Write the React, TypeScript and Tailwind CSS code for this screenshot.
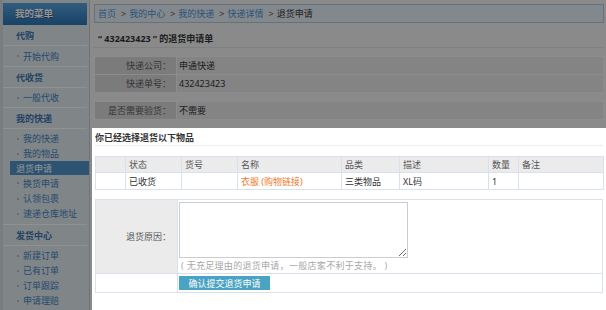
import React from "react";

const Bullet = () => <span className="inline-block w-[2px] h-[2px] bg-[#aebbc5] mr-[4px] shrink-0" />;

function Sidebar() {
  const sectionRow = "h-[21px] mr-[2px] flex items-center pl-[13px] border-b border-[#f7fafc] text-[#3a74ab] font-bold";
  const subRow = "h-[20px] mr-[2px] flex items-center pl-[14px] border-b border-[#f7fafc] text-[#4281bf]";
  const listItem = "h-[15px] flex items-center pl-[14px] text-[#4281bf]";
  return (
    <aside className="w-[90px] shrink-0 bg-[#dde5ea] border-l-[3px] border-l-[#d0d8dd] border-r border-r-[#bccad4] flex flex-col pt-[3px]">
      <div className="h-[22px] mr-[2px] bg-gradient-to-b from-[#58a0da] to-[#2a72b0] flex items-center pl-[12px] text-white font-bold text-[9.5px] [text-shadow:0_1px_1px_#1b4f80]">
        我的菜单
      </div>
      <div className={sectionRow}>代购</div>
      <div className={subRow + " h-[21px]"}><Bullet />开始代购</div>
      <div className={sectionRow + " h-[20px]"}>代收货</div>
      <div className={subRow}><Bullet />一般代收</div>
      <div className={sectionRow}>我的快递</div>
      <div className="pt-[2px] pb-[3px] border-b border-[#f7fafc] mr-[2px]">
        <div className={listItem}><Bullet />我的快递</div>
        <div className={listItem}><Bullet />我的物品</div>
        <div className="h-[14px] ml-[7px] -mr-[2px] flex items-center pl-[6px] bg-[#4f90c6] text-white">退货申请</div>
        <div className={listItem + " h-[16px]"}><Bullet />换货申请</div>
        <div className={listItem}><Bullet />认领包裹</div>
        <div className={listItem}><Bullet />速递仓库地址</div>
      </div>
      <div className={sectionRow + " h-[20px]"}>发货中心</div>
      <div className="pt-[2px] mr-[2px]">
        <div className={listItem}><Bullet />新建订单</div>
        <div className={listItem}><Bullet />已有订单</div>
        <div className={listItem}><Bullet />订单跟踪</div>
        <div className={listItem}><Bullet />申请理赔</div>
      </div>
    </aside>
  );
}

function Crumb({ children }: { children: React.ReactNode }) {
  return <span className="text-[#4a8fd6]">{children}</span>;
}
const Sep = () => <span className="ml-[5px] mr-[3px] text-[#555]">&gt;</span>;

export default function App() {
  const labelTd = "w-[82px] h-[18px] bg-[#d5d5d5] text-right pr-[5px] text-[#5a5a5a] border border-[#eef2f6]";
  const valueTd = "h-[18px] bg-[#e3e3e3] pl-[2px] text-[#333] border border-[#eef2f6]";
  const th = "h-[16px] bg-[#ebebeb] border border-[#d9e1ef] text-left pl-[3px] font-normal text-[#555]";
  const td = "h-[17px] border border-[#d9e1ef] pl-[3px] text-[#333]";
  return (
    <div className="relative flex w-[606px] h-[310px] overflow-hidden bg-[#eeeeee] font-['Noto_Sans','Noto_Sans_CJK_SC',sans-serif] text-[9px] leading-none text-[#333]">
      <Sidebar />
      <main className="ml-[2px] w-[514px] flex flex-col">
        <div className="mx-[2px] mt-[4px] h-[19px] border border-[#a9c5d9] bg-[#e2ebf1] flex items-center pl-[3px]">
          <Crumb>首页</Crumb>
          <Sep />
          <Crumb>我的中心</Crumb>
          <Sep />
          <Crumb>我的快递</Crumb>
          <Sep />
          <Crumb>快递详情</Crumb>
          <Sep />
          <span className="text-[#333]">退货申请</span>
        </div>
        <div className="mx-[2px] mt-[7px] h-[18px] border-b border-[#dcdcdc] flex items-center pl-[4px] font-bold text-[#333]">
          “ 432423423 ” 的退货申请单
        </div>
        <table className="mx-[2px] mt-[8px] w-[510px] border-collapse">
          <tbody>
            <tr>
              <td className={labelTd}>快递公司：</td>
              <td className={valueTd}>申通快递</td>
            </tr>
            <tr>
              <td className={labelTd}>快递单号：</td>
              <td className={valueTd}>432423423</td>
            </tr>
          </tbody>
        </table>
        <table className="mx-[2px] mt-[8px] w-[510px] border-collapse">
          <tbody>
            <tr>
              <td className={labelTd}>是否需要验货：</td>
              <td className={valueTd}>不需要</td>
            </tr>
          </tbody>
        </table>
        <section className="relative z-10 mt-[8px] flex-1 bg-white px-[3px] pt-[1px] shadow-[0_0_0_1200px_rgba(0,0,0,0.42)]">
          <div className="h-[17px] border-b border-[#eeeeee] flex items-center font-bold text-[#333]">
            你已经选择退货以下物品
          </div>
          <table className="mt-[10px] w-[508px] table-fixed border-collapse">
            <colgroup>
              <col className="w-[30px]" />
              <col className="w-[56px]" />
              <col className="w-[56px]" />
              <col className="w-[104px]" />
              <col className="w-[58px]" />
              <col className="w-[89px]" />
              <col className="w-[30px]" />
              <col className="w-[85px]" />
            </colgroup>
            <thead>
              <tr>
                <th className={th}></th>
                <th className={th}>状态</th>
                <th className={th}>货号</th>
                <th className={th}>名称</th>
                <th className={th}>品类</th>
                <th className={th}>描述</th>
                <th className={th}>数量</th>
                <th className={th}>备注</th>
              </tr>
            </thead>
            <tbody>
              <tr>
                <td className={td}></td>
                <td className={td}>已收货</td>
                <td className={td}></td>
                <td className={td + " text-[#f07a2a]"}>衣服 (购物链接)</td>
                <td className={td}>三类物品</td>
                <td className={td}>XL码</td>
                <td className={td}>1</td>
                <td className={td}></td>
              </tr>
            </tbody>
          </table>
          <table className="mt-[9px] w-[508px] border-collapse">
            <tbody>
              <tr>
                <td className="w-[82px] bg-[#ebebeb] border border-[#d9e1ef] text-right pr-[6px] text-[#555] align-middle">
                  退货原因：
                </td>
                <td className="border border-[#d9e1ef] pl-[1px] pt-[2px] pb-[3px] align-top">
                  <textarea className="block w-[229px] h-[56px] border border-[#cccccc] bg-white outline-none" />
                  <div className="mt-[3px] pl-[2px] text-[#a8a8a8] tracking-[0.3px]">( 无充足理由的退货申请，一般店家不利于支持。 )</div>
                </td>
              </tr>
              <tr>
                <td className="h-[19px] border border-[#d9e1ef]"></td>
                <td className="h-[19px] border border-[#d9e1ef] pl-[1px]">
                  <button className="w-[91px] h-[14px] bg-[#4aa3c2] text-white text-[9px] leading-none flex items-center justify-center">
                    确认提交退货申请
                  </button>
                </td>
              </tr>
            </tbody>
          </table>
        </section>
      </main>
    </div>
  );
}
